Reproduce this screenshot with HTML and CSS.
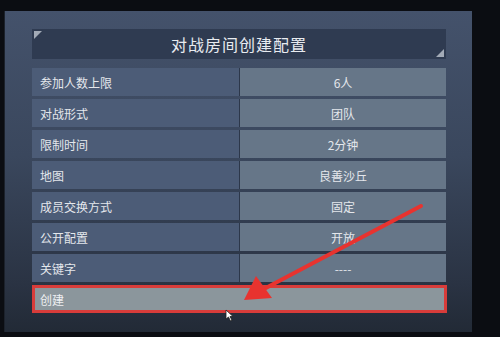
FILE: index.html
```html
<!DOCTYPE html>
<html>
<head>
<meta charset="utf-8">
<link rel="stylesheet" href="styles.css">
</head>
<body>
<div class="screen">
  <div class="panel">
    <div class="title">
      <span class="corner tl"></span>
      <span class="title-text">对战房间创建配置</span>
      <span class="corner br"></span>
    </div>
    <div class="rows">
      <div class="row"><div class="label">参加人数上限</div><div class="value">6人</div></div>
      <div class="row"><div class="label">对战形式</div><div class="value">团队</div></div>
      <div class="row"><div class="label">限制时间</div><div class="value">2分钟</div></div>
      <div class="row"><div class="label">地图</div><div class="value">良善沙丘</div></div>
      <div class="row"><div class="label">成员交换方式</div><div class="value">固定</div></div>
      <div class="row"><div class="label">公开配置</div><div class="value">开放</div></div>
      <div class="row"><div class="label">关键字</div><div class="value">----</div></div>
      <div class="create">创建</div>
    </div>
  </div>
  <svg class="arrow" width="500" height="337" viewBox="0 0 500 337">
    <line x1="421" y1="206" x2="262" y2="290" stroke="#e8332f" stroke-width="4" stroke-linecap="round"/>
    <polygon points="244,300 256,276 272,298" fill="#e8332f"/>
  </svg>
  <svg class="cursor" width="10" height="14" viewBox="0 0 10 14">
    <polygon points="1,1 1,10 3.5,8 5.5,12 7,11.3 5,7.5 8,7.5" fill="#fff" stroke="#222" stroke-width="0.8"/>
  </svg>
</div>
</body>
</html>
```
FILE: styles.css
```css
html, body {
  margin: 0;
  padding: 0;
}
body {
  background: #0b0d12;
  font-family: "Noto Sans CJK SC", "Noto Sans", sans-serif;
}
.screen {
  position: relative;
  width: 500px;
  height: 337px;
  overflow: hidden;
  padding-top: 11px;
  box-sizing: border-box;
}
.panel {
  margin-left: 4px;
  width: 468px;
  height: 321px;
  box-sizing: border-box;
  padding: 18px 26px 19px 27px;
  background: linear-gradient(180deg, #44526b 0%, #3a475d 45%, #2a3343 85%, #222a36 100%);
  border-left: 1px solid #1c222c;
}
.title {
  position: relative;
  height: 30px;
  background: #2f3b51;
  display: flex;
  align-items: center;
  justify-content: center;
}
.title-text {
  color: #e8ebf0;
  font-size: 16px;
  letter-spacing: 1px;
}
.corner {
  position: absolute;
  width: 0;
  height: 0;
}
.corner.tl {
  left: 2px;
  top: 2px;
  border-top: 8px solid #a3abb7;
  border-right: 8px solid transparent;
}
.corner.br {
  right: 2px;
  bottom: 2px;
  border-bottom: 8px solid #a3abb7;
  border-left: 8px solid transparent;
}
.rows {
  margin-top: 9px;
  display: grid;
  grid-auto-rows: 28px;
  row-gap: 3px;
}
.row {
  display: grid;
  grid-template-columns: 207px 1fr;
  column-gap: 1px;
  background: #2c374a;
}
.label, .value {
  color: #e4e7ec;
  font-size: 12px;
  display: flex;
  align-items: center;
}
.label {
  background: #4c5c77;
  padding-left: 8px;
}
.value {
  background: #667688;
  justify-content: center;
}
.create {
  background: #8b969c;
  border: 3px solid #d83c3a;
  box-sizing: border-box;
  color: #eef0f2;
  font-size: 12px;
  padding-left: 5px;
  display: flex;
  align-items: center;
  margin-right: -1px;
}
.arrow {
  position: absolute;
  left: 0;
  top: 0;
}
.cursor {
  position: absolute;
  left: 225px;
  top: 309px;
}
```
